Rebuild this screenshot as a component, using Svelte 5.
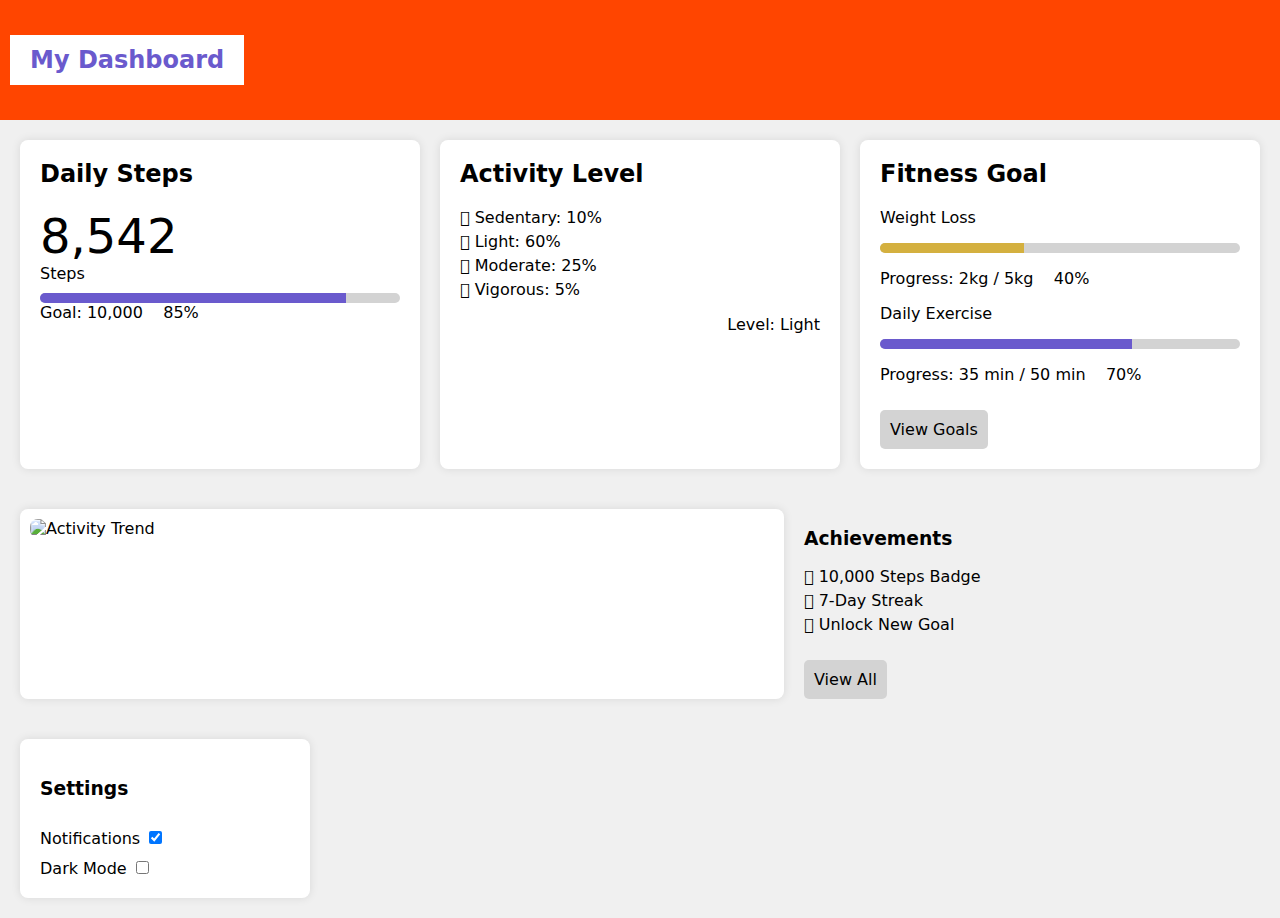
<script>
  const gap = '\u00a0\u00a0\u00a0 ';
  const levels = [
    ['\uf4b8', 'Sedentary: 10%'],
    ['\uf554', 'Light: 60%'],
    ['\uf70c', 'Moderate: 25%'],
    ['\uf44b', 'Vigorous: 5%']
  ];
  const goals = [
    { name: 'Weight Loss', text: 'Progress: 2kg / 5kg', pct: 40, color: '#d4b03f' },
    { name: 'Daily Exercise', text: 'Progress: 35 min / 50 min', pct: 70, color: '#6a5acd' }
  ];
  const badges = [
    ['\uf559', '10,000 Steps Badge'],
    ['\uf7e4', '7-Day Streak'],
    ['\uf4c1', 'Unlock New Goal']
  ];
</script>

<header><h1>My Dashboard</h1></header>

<main>
  <section class="cards">
    <article class="card">
      <h2>Daily Steps</h2>
      <div class="count">8,542</div>
      <div>Steps</div>
      <div class="bar steps-bar"><div class="fill" style="width: 85%; background: #6a5acd"></div></div>
      <div class="pre">Goal: 10,000{gap}85%</div>
    </article>

    <article class="card">
      <h2>Activity Level</h2>
      <ul>
        {#each levels as [icon, label]}
          <li>{icon} {label}</li>
        {/each}
      </ul>
      <div class="level">Level: Light</div>
    </article>

    <article class="card">
      <h2>Fitness Goal</h2>
      {#each goals as g}
        <p>{g.name}</p>
        <div class="bar"><div class="fill" style="width: {g.pct}%; background: {g.color}"></div></div>
        <p class="pre">{g.text}{gap}{g.pct}%</p>
      {/each}
      <button class="goals-button">View Goals</button>
    </article>
  </section>

  <section class="middle">
    <div class="card trend">
      <img src="" alt="Activity Trend" />
    </div>
    <div class="achievements">
      <h3>Achievements</h3>
      <ul>
        {#each badges as [icon, label]}
          <li>{icon} {label}</li>
        {/each}
      </ul>
      <button>View All</button>
    </div>
  </section>

  <section class="card settings">
    <h3>Settings</h3>
    <label>Notifications <input type="checkbox" checked /></label>
    <label>Dark Mode <input type="checkbox" /></label>
  </section>
</main>

<style>
  :global(body) {
    margin: 0;
    background: #f0f0f0;
    color: #000;
    font: 16px "DejaVu Sans", sans-serif;
  }
  header {
    box-sizing: border-box;
    height: 120px;
    padding: 0 10px;
    display: flex;
    align-items: center;
    background: #ff4500;
  }
  h1 {
    margin: 0;
    padding: 11px 20px;
    font-size: 24px;
    line-height: 28px;
    color: #6a5acd;
    background: #fff;
  }
  main {
    display: flex;
    flex-direction: column;
    gap: 40px;
    padding: 20px;
  }
  .cards {
    display: grid;
    grid-template-columns: repeat(3, 1fr);
    gap: 20px;
    height: 329px;
  }
  .card {
    box-sizing: border-box;
    padding: 20px;
    border-radius: 8px;
    background: #fff;
    box-shadow: 0 0 10px rgba(0, 0, 0, 0.1);
  }
  h2 {
    margin: 0 0 20px;
    font-size: 24px;
    line-height: 28px;
  }
  .count {
    font-size: 48px;
    line-height: 56px;
  }
  .pre {
    white-space: pre;
  }
  .bar {
    height: 10px;
    border-radius: 5px;
    overflow: hidden;
    background: #d3d3d3;
  }
  .steps-bar {
    margin-top: 10px;
  }
  .fill {
    height: 100%;
  }
  ul {
    margin: 0;
    padding: 0;
    list-style: none;
  }
  li {
    height: 19px;
    margin-bottom: 5px;
  }
  .level {
    margin-top: 16px;
    text-align: right;
  }
  p {
    margin: 16px 0;
  }
  button {
    display: block;
    padding: 10px;
    border: 0;
    border-radius: 5px;
    background: #d3d3d3;
    color: #000;
    font: inherit;
  }
  .goals-button {
    margin-top: 26px;
  }
  .middle {
    display: flex;
    gap: 20px;
    height: 190px;
  }
  .trend {
    width: 764px;
    padding: 10px;
  }
  .trend img {
    display: block;
    width: 100%;
    border-radius: 8px;
  }
  h3 {
    margin: 0;
    font-size: 18.72px;
    line-height: 22px;
  }
  .achievements {
    padding-top: 19px;
  }
  .achievements h3 {
    margin-bottom: 17px;
  }
  .achievements button {
    margin-top: 26px;
  }
  .settings {
    width: 290px;
    height: 159px;
    padding-top: 39px;
  }
  .settings h3 {
    margin-bottom: 28px;
  }
  label {
    display: block;
    height: 20px;
    margin-bottom: 10px;
  }
</style>
